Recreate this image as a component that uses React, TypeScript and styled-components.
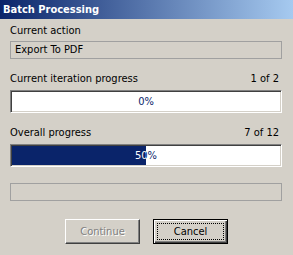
import styled, { createGlobalStyle } from 'styled-components';

const uiFont = `"DejaVu Sans Condensed", "Liberation Sans", Arial, sans-serif`

const GlobalStyle = createGlobalStyle`
	body {
		margin: 0;
		background: #d4d0c8;
		font-family: ${uiFont};
		font-size: 11px;
	}
`

const ProgressBar = ({ value }: { value: number }) => {
	return (
		<Bar>
			<BarText>{value}%</BarText>
			<BarFill style={{ clipPath: `inset(0 ${100 - value}% 0 0)` }}>
				<BarText $light>{value}%</BarText>
			</BarFill>
		</Bar>
	)
}

const App = () => {
	return (
		<Dialog>
			<GlobalStyle />
			<TitleBar>Batch Processing</TitleBar>
			<Content>
				<LabelRow>
					<span>Current action</span>
				</LabelRow>
				<Field>Export To PDF</Field>

				<LabelRow $gap={13}>
					<span>Current iteration progress</span>
					<span>1 of 2</span>
				</LabelRow>
				<ProgressBar value={0} />

				<LabelRow $gap={13}>
					<span>Overall progress</span>
					<span>7 of 12</span>
				</LabelRow>
				<ProgressBar value={50} />

				<Field $gap={16} />

				<Buttons>
					<Button disabled>
						<FocusRing>Continue</FocusRing>
					</Button>
					<Button $default>
						<FocusRing $focused>Cancel</FocusRing>
					</Button>
				</Buttons>
			</Content>
		</Dialog>
	)
}

const Dialog = styled.div`
	width: 293px;
	height: 255px;
	background: #d4d0c8;
	overflow: hidden;
`

const TitleBar = styled.div`
	height: 19px;
	line-height: 19px;
	padding-left: 3px;
	background: linear-gradient(to right, #0a246a, #a6caf0);
	color: #fff;
	font-weight: bold;
	font-size: 11px;
`

const Content = styled.div`
	display: flex;
	flex-direction: column;
	padding: 5px 11px 0 10px;
`

const LabelRow = styled.div<{ $gap?: number }>`
	display: flex;
	justify-content: space-between;
	line-height: 13px;
	height: 13px;
	padding-right: 3px;
	margin-top: ${p => p.$gap || 0}px;
	color: #000;
`

const Field = styled.div<{ $gap?: number }>`
	box-sizing: border-box;
	height: 18px;
	margin-top: ${p => p.$gap || 4}px;
	border: 1px solid #a0a0a0;
	padding-left: 4px;
	line-height: 16px;
	color: #000;
`

const Bar = styled.div`
	position: relative;
	box-sizing: border-box;
	height: 23px;
	margin-top: 5px;
	background: #fff;
	border: 1px solid;
	border-color: #808080 #fff #fff #808080;
	box-shadow: inset 1px 1px 0 #404040, inset -1px -1px 0 #d4d0c8;
	padding: 1px;
`

const BarText = styled.div<{ $light?: boolean }>`
	height: 19px;
	line-height: 19px;
	text-align: center;
	color: ${p => p.$light ? '#fff' : '#0a246a'};
`

const BarFill = styled.div`
	position: absolute;
	top: 1px;
	left: 1px;
	right: 1px;
	bottom: 1px;
	background: #0a246a;
`

const Buttons = styled.div`
	display: flex;
	justify-content: center;
	gap: 13px;
	margin-top: 18px;
	margin-left: -10px;
	margin-right: -11px;
`

const Button = styled.button<{ $default?: boolean }>`
	display: flex;
	box-sizing: border-box;
	width: 75px;
	height: 25px;
	padding: 3px;
	margin: 0;
	background: #d4d0c8;
	font-family: ${uiFont};
	font-size: 11px;
	color: #000;
	border: 1px solid;
	border-color: ${p => p.$default ? '#000' : '#fff #404040 #404040 #fff'};
	box-shadow: ${p => p.$default
		? 'inset 1px 1px 0 #fff, inset -1px -1px 0 #404040, inset -2px -2px 0 #808080'
		: 'inset -1px -1px 0 #808080'};

	&:disabled {
		color: #808080;
		text-shadow: 1px 1px 0 #fff;
	}
`

const FocusRing = styled.span<{ $focused?: boolean }>`
	flex: 1;
	display: flex;
	align-items: center;
	justify-content: center;
	border: 1px dotted ${p => p.$focused ? '#000' : 'transparent'};
`

export default App
